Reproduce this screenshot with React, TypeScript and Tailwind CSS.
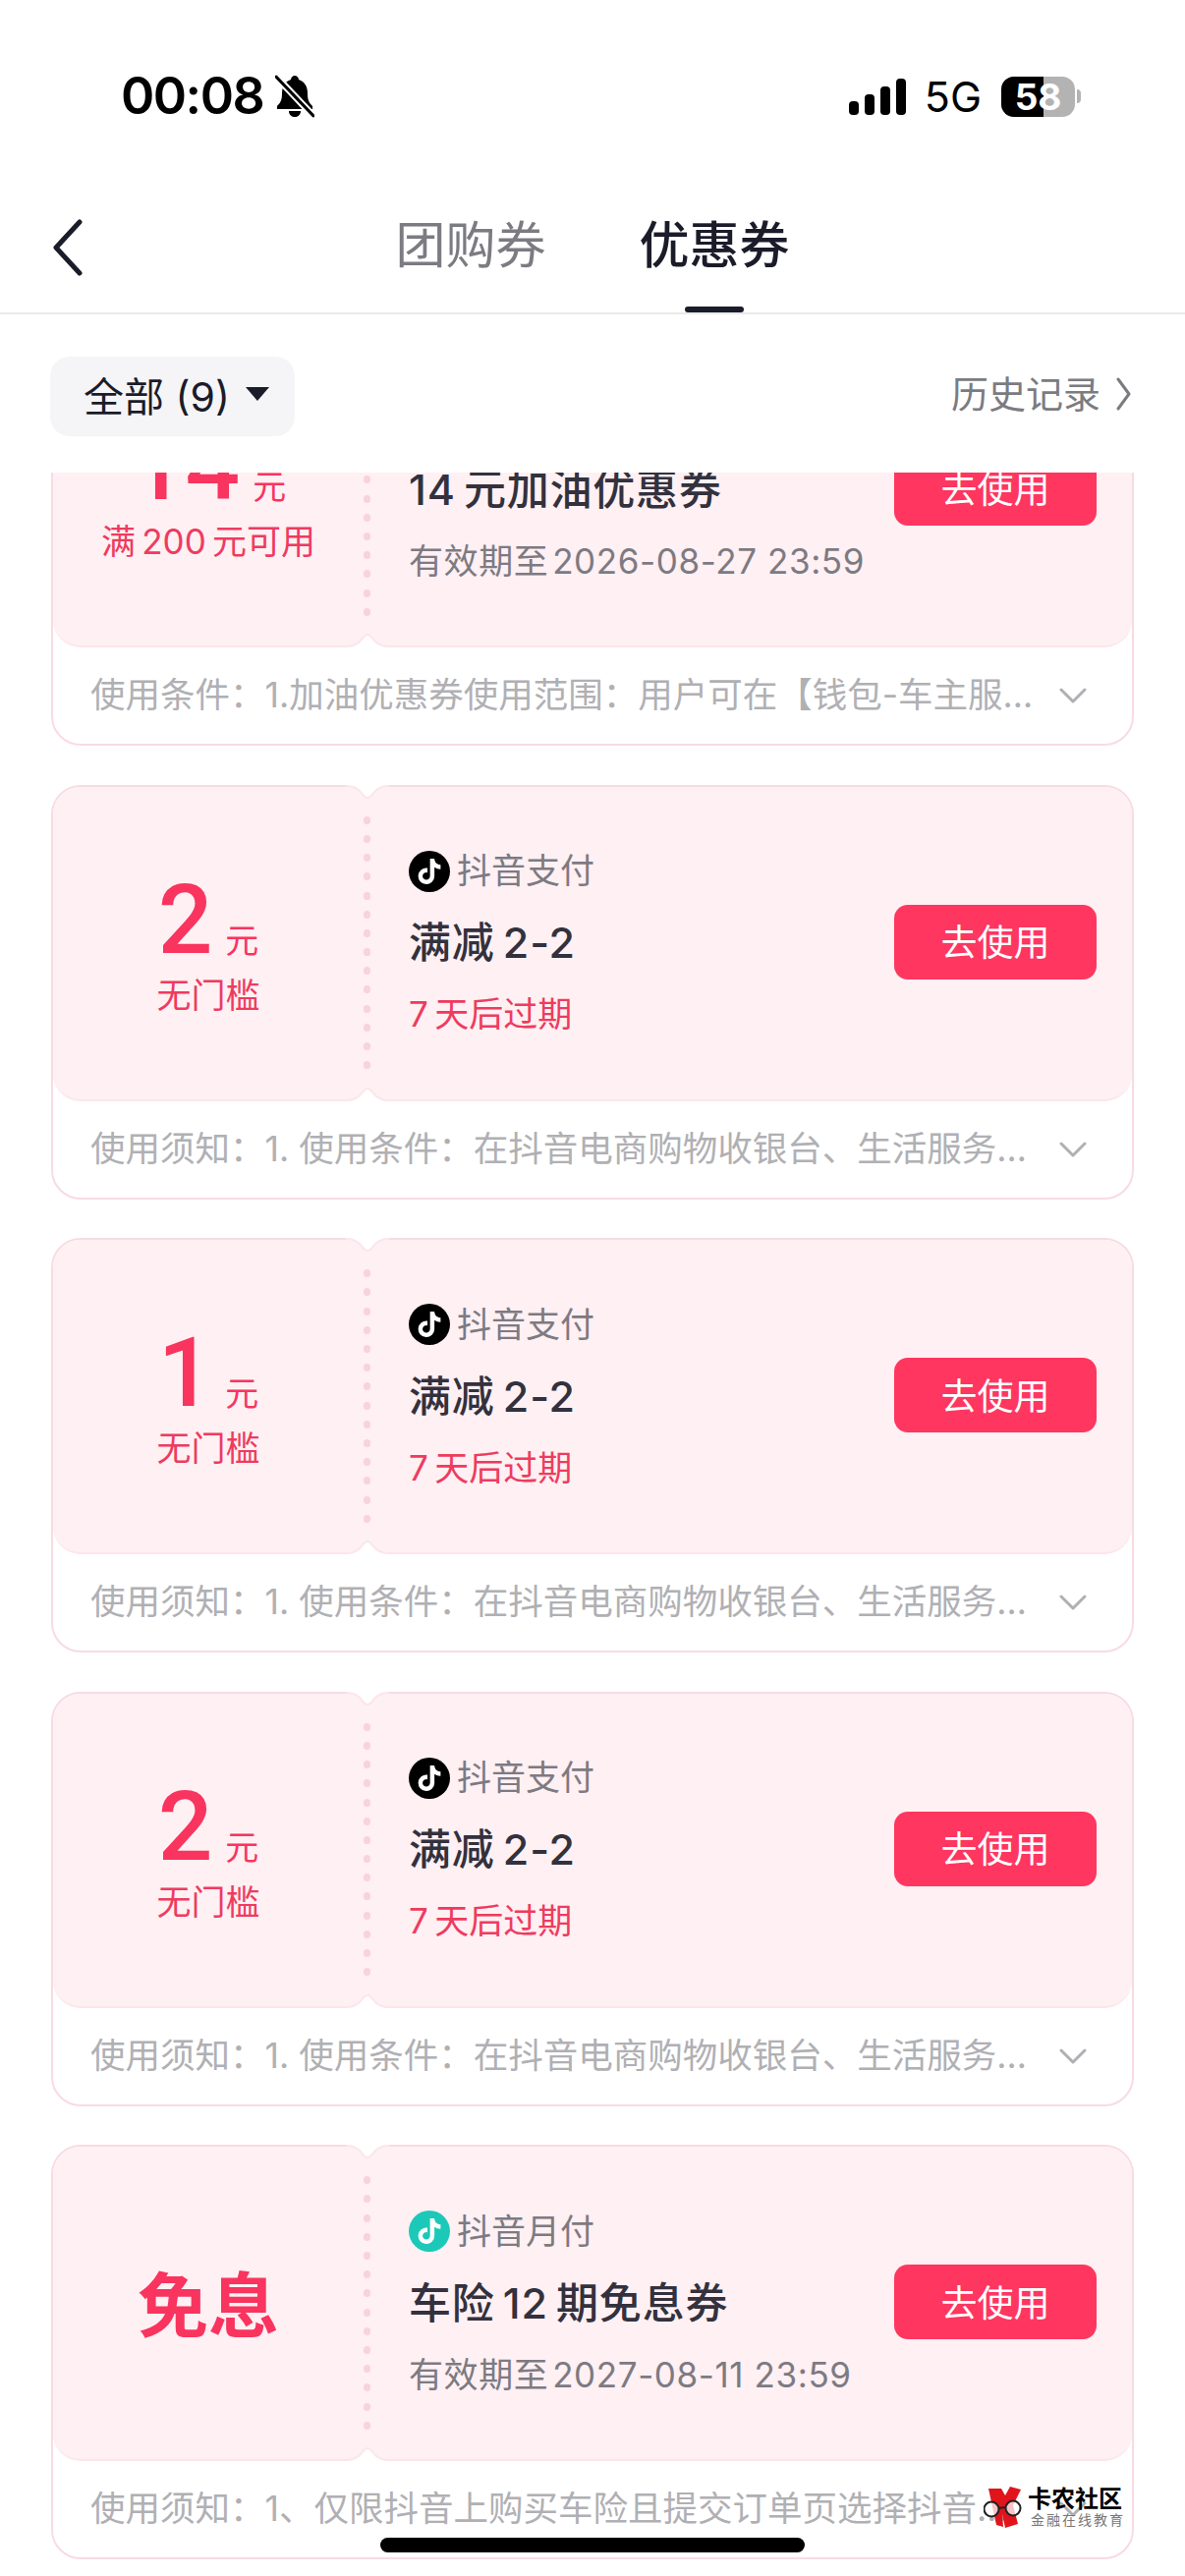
import { FaTiktok } from "react-icons/fa6";

const coupons = [
  {
    amount: "14",
    rule: "满\u2009200\u2009元可用",
    brand: "抖音支付",
    title: "14\u2009元加油优惠券",
    expire: "有效期至\u200a2026-08-27 23:59",
    note: "使用条件：1.加油优惠券使用范围：用户可在【钱包-车主服务】中查看并领取使用",
  },
  {
    amount: "2",
    rule: "无门槛",
    brand: "抖音支付",
    title: "满减\u20092-2",
    expire: "7\u2009天后过期",
    urgent: true,
    note: "使用须知：1. 使用条件：在抖音电商购物收银台、生活服务等场景下单可用",
  },
  {
    amount: "1",
    rule: "无门槛",
    brand: "抖音支付",
    title: "满减\u20092-2",
    expire: "7\u2009天后过期",
    urgent: true,
    note: "使用须知：1. 使用条件：在抖音电商购物收银台、生活服务等场景下单可用",
  },
  {
    amount: "2",
    rule: "无门槛",
    brand: "抖音支付",
    title: "满减\u20092-2",
    expire: "7\u2009天后过期",
    urgent: true,
    note: "使用须知：1. 使用条件：在抖音电商购物收银台、生活服务等场景下单可用",
  },
  {
    free: true,
    brand: "抖音月付",
    title: "车险\u200912\u2009期免息券",
    expire: "有效期至\u200a2027-08-11 23:59",
    note: "使用须知：1、仅限抖音上购买车险且提交订单页选择抖音月付支付时可用",
  },
];

const StatusBar = () => (
  <div className="flex h-[190px] items-start justify-between pl-[123px] pr-[106px] pt-[70px]">
    <div className="flex items-center gap-[12px]">
      <span className="text-[52px] font-semibold leading-[56px] tracking-[-1.5px] text-black">00:08</span>
      <svg width="40" height="44" viewBox="0 0 40 44">
        <path d="M20 1c2 0 4 2 4 4 6 2 9 7 9 14 0 6 1 9 5 13v3H2v-3c4-4 5-7 5-13 0-7 3-12 9-14 0-2 2-4 4-4z" fill="#000" />
        <path d="M14 37h12c0 4-3 6-6 6s-6-2-6-6z" fill="#000" />
        <path d="M2 3l36 38" stroke="#fff" strokeWidth="7" />
        <path d="M1 2l38 40" stroke="#000" strokeWidth="3" strokeLinecap="round" />
      </svg>
    </div>
    <div className="flex items-center pt-[6px]">
      <div className="flex items-end gap-[6px]">
        <div className="h-[14px] w-[10px] rounded-[4px] bg-black" />
        <div className="h-[21px] w-[10px] rounded-[4px] bg-black" />
        <div className="h-[29px] w-[10px] rounded-[4px] bg-black" />
        <div className="h-[37px] w-[10px] rounded-[4px] bg-black" />
      </div>
      <span className="ml-[19px] text-[43px] leading-[44px] text-black">5G</span>
      <div className="relative ml-[20px] flex h-[41px] w-[75px] overflow-hidden rounded-[13px] bg-[#b3b3b3]">
        <div className="h-full w-[43px] bg-black" />
        <span className="absolute inset-0 text-center text-[37px] font-bold leading-[41px] text-white">58</span>
      </div>
      <div className="ml-[2px] h-[14px] w-[4px] rounded-r-full bg-[#b3b3b3]" />
    </div>
  </div>
);

const NavBar = () => (
  <div className="relative flex h-[130px] items-start justify-center gap-[95px] border-b-2 border-[#e9e9eb]">
    <svg className="absolute left-[50px] top-[32px]" width="36" height="60" viewBox="0 0 36 60">
      <path d="M31 4L7 30l24 26" fill="none" stroke="#1b1c2a" strokeWidth="5" strokeLinecap="round" strokeLinejoin="round" />
    </svg>
    <span className="pt-[30px] text-[51px] leading-[60px] text-[#7b7b82]">团购券</span>
    <div className="relative h-full">
      <span className="block pt-[30px] text-[51px] font-medium leading-[60px] text-[#1b1c2a]">优惠券</span>
      <div className="absolute bottom-0 left-[46px] h-[6px] w-[60px] rounded-full bg-[#1b1c2a]" />
    </div>
  </div>
);

const FilterBar = () => (
  <div className="flex h-[161px] items-start justify-between pl-[51px] pr-[54px] pt-[43px]">
    <div className="flex h-[81px] w-[249px] items-center rounded-[20px] bg-[#f5f5f7] pl-[34px]">
      <span className="text-[41px] leading-[48px] text-[#1b1c2a]">全部 (9)</span>
      <svg className="ml-[16px] mb-[6px]" width="24" height="14" viewBox="0 0 24 14">
        <path d="M0 0h24L12 14z" fill="#1b1c2a" />
      </svg>
    </div>
    <div className="flex h-[76px] items-center text-[#7b7b82]">
      <span className="text-[38px] leading-[46px]">历史记录</span>
      <svg className="ml-[16px]" width="16" height="34" viewBox="0 0 16 34">
        <path d="M2 2l11 15L2 32" fill="none" stroke="#7b7b82" strokeWidth="3" strokeLinecap="round" strokeLinejoin="round" />
      </svg>
    </div>
  </div>
);

const Notch = ({ flip }: { flip?: boolean }) => (
  <svg
    className={flip ? "absolute bottom-[-2px] left-[298px]" : "absolute left-[298px] top-[-2px] rotate-180"}
    width="44"
    height="18"
    viewBox="0 0 44 18"
  >
    <path d="M0 17c6 0 10-1 14-5 3-3 5-7 8-7s5 4 8 7c4 4 8 5 14 5v1H0z" fill="#fff" />
    <path d="M0 17c6 0 10-1 14-5 3-3 5-7 8-7s5 4 8 7c4 4 8 5 14 5" fill="none" stroke="#fbe6eb" strokeWidth="2" />
  </svg>
);

const CouponCard = ({ coupon }: { coupon: (typeof coupons)[number] }) => (
  <div className="flex h-[422px] flex-col rounded-[30px] border-2 border-[#f8dbe4] bg-white">
    <div className="relative flex h-[320px] shrink-0 items-center rounded-[28px] border-b-2 border-[#fbe6eb] bg-[#fef0f3]">
      <Notch />
      <Notch flip />
      <div className="flex w-[316px] shrink-0 flex-col items-center pt-[6px] text-[#f9345f]">
        {coupon.free ? (
          <span className="text-[72px] font-semibold leading-[100px]">免息</span>
        ) : (
          <>
            <div className="flex items-baseline gap-[13px]">
              <span className="text-[98px] font-medium leading-[100px]" style={{ fontFamily: "Roboto, sans-serif" }}>
                {coupon.amount}
              </span>
              <span className="text-[34px] leading-[40px]">元</span>
            </div>
            <span className="text-[35px] leading-[52px] text-[#ee3b5f]">{coupon.rule}</span>
          </>
        )}
      </div>
      <div className="flex w-[8px] shrink-0 flex-col gap-[11.2px]">
        {Array.from({ length: 14 }).map((_, i) => (
          <div key={i} className="h-[8px] w-[7px] rounded-full bg-[#f8d2de]" />
        ))}
      </div>
      <div className="flex min-w-0 flex-1 flex-col pl-[38px]">
        <div className="flex h-[73px] items-center gap-[7px]">
          <div
            className={
              coupon.free
                ? "flex h-[42px] w-[42px] items-center justify-center rounded-full bg-[#1cc9b8]"
                : "flex h-[42px] w-[42px] items-center justify-center rounded-full bg-black"
            }
          >
            <FaTiktok className="h-[26px] w-[26px] text-white" />
          </div>
          <span className="text-[35px] text-[#7d7a82]">{coupon.brand}</span>
        </div>
        <div className="h-[73px] whitespace-nowrap text-[43px] font-medium leading-[73px] tracking-[0.8px] text-[#33313d]">
          {coupon.title}
        </div>
        <div
          className={
            coupon.urgent
              ? "h-[73px] whitespace-nowrap text-[35px] leading-[73px] text-[#ee3b5f]"
              : "h-[73px] whitespace-nowrap text-[35px] leading-[73px] tracking-[0.6px] text-[#7d7a82]"
          }
        >
          {coupon.expire}
        </div>
      </div>
      <button className="mr-[36px] mb-[2px] h-[76px] w-[206px] shrink-0 rounded-[14px] bg-[#fe3660] pt-[3px] text-[37px] text-white">
        去使用
      </button>
    </div>
    <div className="flex flex-1 items-center pl-[38px] pr-[46px]">
      <span className="min-w-0 flex-1 truncate pr-[22px] text-[35.5px] text-[#b0b0b4]">{coupon.note}</span>
      <svg width="28" height="16" viewBox="0 0 28 16">
        <path d="M2 2l12 12L26 2" fill="none" stroke="#b0b0b4" strokeWidth="3" strokeLinecap="round" strokeLinejoin="round" />
      </svg>
    </div>
  </div>
);

const Watermark = () => (
  <div className="absolute bottom-[49px] right-[61px] flex items-center gap-[3px]">
    <svg width="42" height="42" viewBox="0 0 42 42">
      <path d="M5 2h13l4 7 5-9 11 3-8 16 5 19-13 4-3-14 1 13-7-2z" fill="#e1141c" />
      <circle cx="8" cy="23" r="7.5" fill="#fff" fillOpacity="0.75" stroke="#222" strokeWidth="2" />
      <circle cx="30" cy="22" r="7.5" fill="#fff" fillOpacity="0.75" stroke="#222" strokeWidth="2" />
      <path d="M15 22l8-1" stroke="#222" strokeWidth="2" />
    </svg>
    <div className="flex flex-col items-start">
      <span className="text-[24px] font-bold leading-[26px] text-black">卡农社区</span>
      <span className="pl-[3px] text-[14px] leading-[16px] tracking-[2px] text-[#777]">金融在线教育</span>
    </div>
  </div>
);

export default function App() {
  return (
    <div
      className="relative flex h-[2622px] w-[1206px] flex-col overflow-hidden bg-white"
      style={{ fontFamily: 'Inter, "Noto Sans CJK SC", sans-serif' }}
    >
      <StatusBar />
      <NavBar />
      <FilterBar />
      <div className="min-h-0 flex-1 overflow-hidden">
        <div className="mt-[-144px] flex flex-col gap-[39.5px] px-[52px]">
          {coupons.map((coupon, i) => (
            <CouponCard key={i} coupon={coupon} />
          ))}
        </div>
      </div>
      <Watermark />
      <div className="absolute bottom-[24px] left-[387px] h-[15px] w-[432px] rounded-full bg-black" />
    </div>
  );
}
